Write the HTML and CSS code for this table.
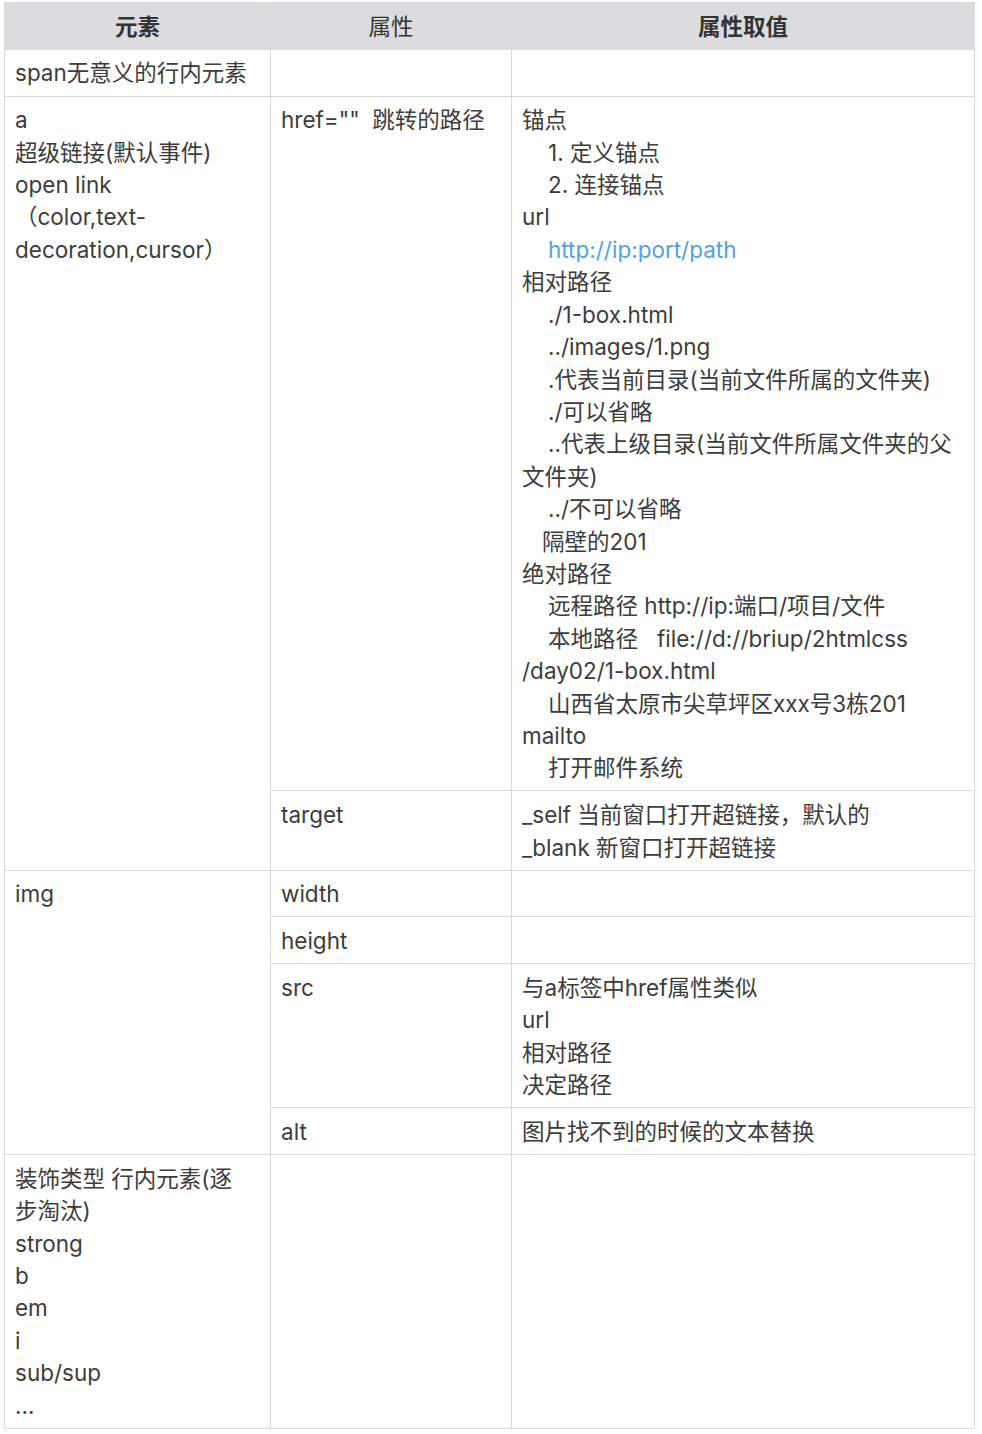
FILE: index.html
```html
<!DOCTYPE html>
<html lang="zh-CN">
<head>
  <meta charset="UTF-8">
  <meta name="viewport" content="width=device-width, initial-scale=1.0">
  <title>HTML 行内元素</title>
  <link rel="stylesheet" href="styles.css">
</head>
<body>
  <table class="notes">
    <colgroup>
      <col class="col-el">
      <col class="col-attr">
      <col class="col-val">
    </colgroup>
    <thead>
      <tr>
        <th>元素</th>
        <th class="plain">属性</th>
        <th>属性取值</th>
      </tr>
    </thead>
    <tbody>
      <tr>
        <td>span无意义的行内元素</td>
        <td></td>
        <td></td>
      </tr>
      <tr>
        <td rowspan="2">a<br>超级链接(默认事件)<br>open link<br>（color,text-<br>decoration,cursor）</td>
        <td>href=""&nbsp; 跳转的路径</td>
        <td>
          锚点<br>
          <span class="ind"></span>1. 定义锚点<br>
          <span class="ind"></span>2. 连接锚点<br>
          url<br>
          <span class="ind"></span><a href="#" class="link">http://ip:port/path</a><br>
          相对路径<br>
          <span class="ind"></span>./1-box.html<br>
          <span class="ind"></span>../images/1.png<br>
          <span class="ind"></span>.代表当前目录(当前文件所属的文件夹)<br>
          <span class="ind"></span>./可以省略<br>
          <span class="ind"></span>..代表上级目录(当前文件所属文件夹的父<br>文件夹)<br>
          <span class="ind"></span>../不可以省略<br>
          <span class="ind-s"></span>隔壁的201<br>
          绝对路径<br>
          <span class="ind"></span>远程路径 http://ip:端口/项目/文件<br>
          <span class="ind"></span>本地路径&nbsp;&nbsp; file://d://briup/2htmlcss<br>/day02/1-box.html<br>
          <span class="ind"></span>山西省太原市尖草坪区xxx号3栋201<br>
          mailto<br>
          <span class="ind"></span>打开邮件系统
        </td>
      </tr>
      <tr>
        <td>target</td>
        <td>_self 当前窗口打开超链接，默认的<br>_blank 新窗口打开超链接</td>
      </tr>
      <tr>
        <td rowspan="4">img</td>
        <td>width</td>
        <td></td>
      </tr>
      <tr>
        <td>height</td>
        <td></td>
      </tr>
      <tr>
        <td>src</td>
        <td>与a标签中href属性类似<br>url<br>相对路径<br>决定路径</td>
      </tr>
      <tr>
        <td>alt</td>
        <td>图片找不到的时候的文本替换</td>
      </tr>
      <tr>
        <td>装饰类型 行内元素(逐<br>步淘汰)<br>strong<br>b<br>em<br>i<br>sub/sup<br>...</td>
        <td></td>
        <td></td>
      </tr>
    </tbody>
  </table>
</body>
</html>
```

FILE: styles.css
```css
body {
  margin: 2px 7px 0 4px;
  background: #ffffff;
  font-family: Inter, "Noto Sans CJK SC", sans-serif;
  font-size: 22.5px;
  line-height: 32.4px;
  color: #3c3c3c;
}

.notes {
  width: 100%;
  border-collapse: collapse;
  table-layout: fixed;
}

.col-el {
  width: 266px;
}

.col-attr {
  width: 241px;
}

.notes th,
.notes td {
  border: 1px solid #dadada;
  padding: 7.7px 10px 5.7px;
  vertical-align: top;
  text-align: left;
}

.notes th {
  background: #dcdcdf;
  color: #333333;
  font-weight: bold;
  text-align: center;
}

.notes th.plain {
  font-weight: normal;
}

.ind {
  display: inline-block;
  width: 26px;
}

.ind-s {
  display: inline-block;
  width: 20px;
}

.link {
  color: #4ea4e2;
  text-decoration: none;
}
```
